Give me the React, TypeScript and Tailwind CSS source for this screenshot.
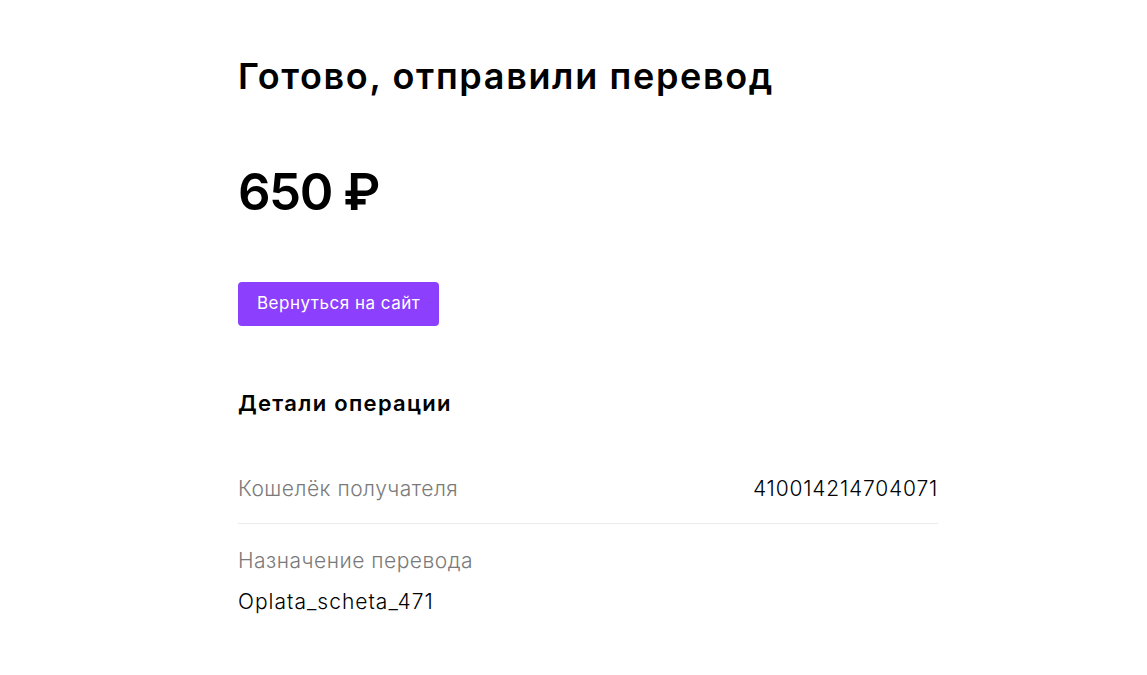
export default function App() {
  return (
    <div className="min-h-[675px] bg-white font-['Inter','Noto_Sans',sans-serif] text-black">
      <div className="ml-[238px] w-[700px] pt-[52px]">
        <h1 className="text-[36px] font-semibold leading-[48px] tracking-[1.65px]">
          Готово, отправили перевод
        </h1>
        <div className="mt-[62px] text-[51px] font-semibold leading-[60px] tracking-[-1.5px]">650 ₽</div>
        <button className="mt-[60px] h-[44px] rounded-[4px] bg-[#8c3ffd] px-[19px] text-[17px] tracking-[0.5px] text-white">
          Вернуться на сайт
        </button>
        <h2 className="mt-[62px] text-[22px] font-semibold leading-[30px] tracking-[1.3px]">Детали операции</h2>
        <div className="mt-[55px] flex items-center justify-between border-b border-[#ebebeb] pb-[18px] text-[21px] font-light tracking-[0.5px]">
          <span className="text-[#7a7a7a]">Кошелёк получателя</span>
          <span className="tracking-[0.8px]">410014214704071</span>
        </div>
        <div className="pt-[21px] text-[21px] font-light tracking-[0.5px]">
          <div className="text-[#7a7a7a]">Назначение перевода</div>
          <div className="mt-[10px] tracking-[1px]">Oplata_scheta_471</div>
        </div>
      </div>
    </div>
  )
}
